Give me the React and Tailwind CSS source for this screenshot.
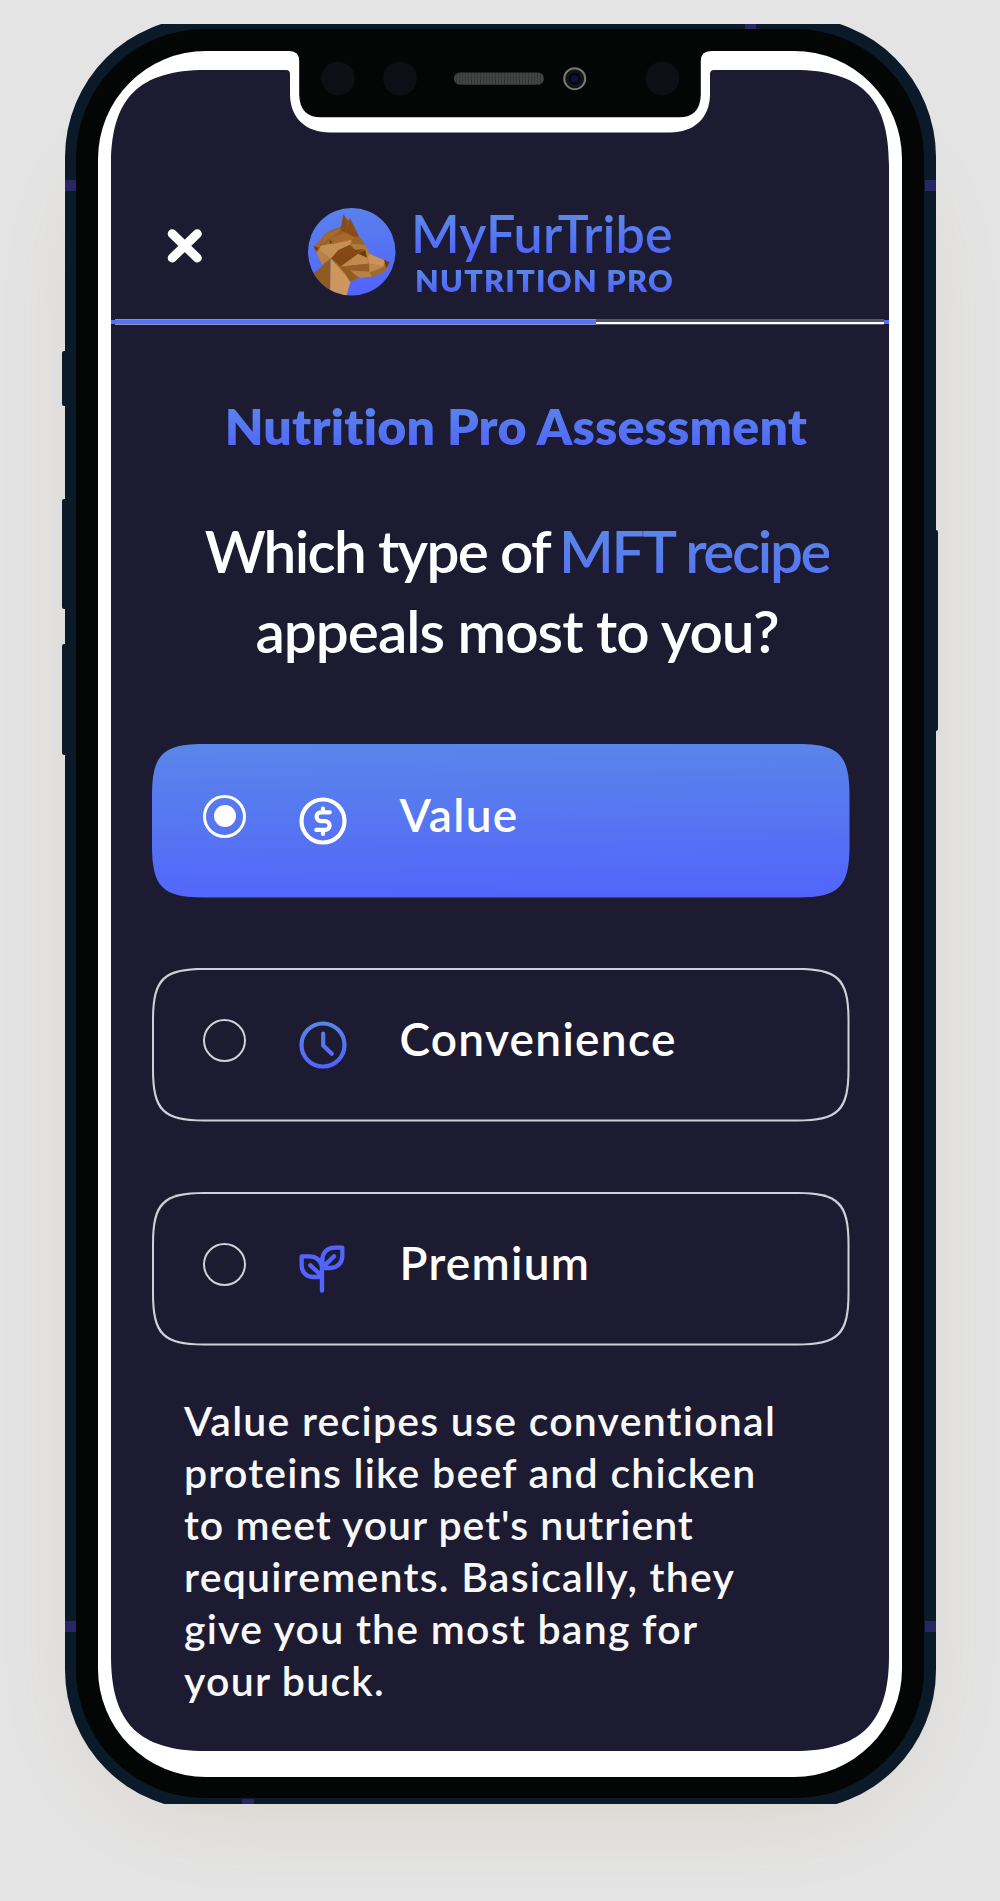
import React from "react";

const FACETS = [
  ["#a5682a", "42,139 55,125 75,100 97,88 123,79 130,42 144,62 149,52 176,107 195,133 203,147 208,160 250,178 268,186 262,202 240,222 215,229 180,232 150,244 92,175 66,192 50,158"],
  ["#8f5c20", "92,174 91,290 60,290 30,228"],
  ["#cd965c", "92,174 152,240 138,292 90,292"],
  ["#b98147", "57,148 92,174 66,192 50,158"],
  ["#6d3f12", "41,137 57,142 48,153"],
  ["#92602a", "57,138 75,100 97,88 123,79 136,97 98,110 80,128"],
  ["#a36a2e", "75,101 123,84 110,100 62,132"],
  ["#c68f54", "57,148 62,136 92,130 155,117 150,133 115,150 92,174"],
  ["#6d3f12", "88,118 98,124 90,132"],
  ["#864d16", "130,42 144,62 138,97 122,90 123,79"],
  ["#8a4e15", "149,52 176,107 165,112 138,97 144,70"],
  ["#a9692d", "98,124 138,97 165,112 155,117 95,132"],
  ["#834914", "94,174 115,149 150,133 165,146 197,140 180,156 122,198"],
  ["#9a6328", "155,117 176,107 197,134 160,130"],
  ["#b07a3e", "150,133 160,130 197,134 194,146 165,148"],
  ["#c08a4e", "122,198 180,156 203,172 205,190"],
  ["#6a3c0a", "174,160 196,148 202,172"],
  ["#b5803f", "196,134 208,160 203,182 196,150"],
  ["#c9935a", "208,160 254,180 250,198 207,190 203,172"],
  ["#96602a", "122,198 205,190 208,214 150,210"],
  ["#c08a4e", "207,190 250,198 230,212 208,216"],
  ["#9f6a30", "262,202 240,222 215,228 208,216 250,200"],
  ["#6a3c12", "252,178 268,186 258,203"],
  ["#b98147", "150,210 208,214 215,229 180,232 165,226"],
  ["#8f5c24", "122,198 150,210 176,232 150,244"],
];

function DogBadge() {
  return (
    <svg viewBox="24 23 262 262" className="size-[87.5px] shrink-0">
      <defs>
        <linearGradient id="badge" x1="0" y1="0" x2="0.15" y2="1">
          <stop offset="0" stopColor="#5a84ea" />
          <stop offset="1" stopColor="#5264fb" />
        </linearGradient>
        <clipPath id="disc"><circle cx="155" cy="154" r="131" /></clipPath>
      </defs>
      <g clipPath="url(#disc)">
        <rect x="20" y="20" width="270" height="270" fill="url(#badge)" />
        {FACETS.map(([fill, points]) => <polygon key={points} points={points} fill={fill} />)}
      </g>
    </svg>
  );
}

function NotchHardware() {
  return (
    <svg viewBox="285 49 430 70" className="pointer-events-none absolute top-[-2px] left-[187px] h-[70px] w-[430px]">
      <defs>
        <pattern id="mesh" width="3" height="3" patternUnits="userSpaceOnUse">
          <rect width="3" height="3" fill="#444" />
          <rect width="1" height="3" fill="#363636" />
        </pattern>
      </defs>
      <path d="M285 49V51H289.500Q299.200 51 299.200 61V95Q300 117.300 321 117.300H679Q700 117.300 700.800 95V61Q700.800 51 711 51H715V49Z" fill="#040605" />
      <circle cx="338" cy="78.500" r="16.800" fill="#0e0f15" />
      <circle cx="400" cy="78.500" r="16.800" fill="#0e0f15" />
      <circle cx="662.300" cy="78.500" r="16.800" fill="#0e0f15" />
      <rect x="454" y="72.500" width="90" height="12.300" rx="6" fill="url(#mesh)" />
      <circle cx="574.700" cy="78.700" r="10.500" fill="#141414" stroke="#77777a" strokeWidth="2" />
      <circle cx="574.700" cy="78.700" r="6" fill="#060709" />
      <circle cx="574.700" cy="78.700" r="3.500" fill="#0b1336" />
    </svg>
  );
}

function DollarIcon() {
  return (
    <svg viewBox="0 0 48 48" fill="none" stroke="#fff" strokeWidth="4.200" strokeLinecap="round" strokeLinejoin="round" className="size-12">
      <circle cx="24" cy="24" r="21.500" />
      <path d="M30.800 15.300H22a4.400 4.400 0 0 0 0 8.800h4.200a4.400 4.400 0 0 1 0 8.800H17.300M24 11.500v3.500M24 33v4" />
    </svg>
  );
}

function ClockIcon() {
  return (
    <svg viewBox="0 0 48 48" fill="none" stroke="url(#clock)" strokeWidth="4.200" strokeLinecap="round" strokeLinejoin="round" className="size-12">
      <defs>
        <linearGradient id="clock" gradientUnits="userSpaceOnUse" x1="22" y1="2" x2="26" y2="46">
          <stop offset="0" stopColor="#5a84ea" />
          <stop offset="1" stopColor="#5264fb" />
        </linearGradient>
      </defs>
      <circle cx="24" cy="24" r="21.500" />
      <path d="M24.200 12.700V24.600L32.800 32.800" />
    </svg>
  );
}

function SproutIcon() {
  return (
    <svg viewBox="476 374 144 144" fill="none" stroke="#5264fb" strokeWidth="13" strokeLinecap="round" strokeLinejoin="round" className="size-12">
      <path d="M484 408H508C530 408 545 424 545 445V470H520C499 470 484 456 484 436ZM606 382V406C606 428 591 443 570 443H546V419C546 397 561 382 583 382ZM510 435L545 467M581 408L547 441M545 440V511" />
    </svg>
  );
}

const OPTIONS = [
  { label: "Value", Icon: DollarIcon, selected: true },
  { label: "Convenience", Icon: ClockIcon },
  { label: "Premium", Icon: SproutIcon },
];

function Option({ label, Icon, selected }) {
  return (
    <div
      className={
        "h-[153.500px] w-[697.500px] p-[2px] [clip-path:path('M0_52C0_10.500_10.500_0_52_0H645.500C687_0_697.500_10.500_697.500_52V101.500C697.500_143_687_153.500_645.500_153.500H52C10.500_153.500_0_143_0_101.500Z')] " +
        (selected ? "bg-linear-[179deg] from-[#5a86e9] to-[#5264fb]" : "bg-[#d2d0d5]")
      }
    >
      <div
        className={
          "flex h-full items-start pl-[49px] [clip-path:path('M0_51C0_10_10_0_51_0H642.500C683.500_0_693.500_10_693.500_51V98.500C693.500_139.500_683.500_149.500_642.500_149.500H51C10_149.500_0_139.500_0_98.500Z')] " +
          (selected ? "" : "bg-[#1c1b32]")
        }
      >
        <div className={"mt-[48.700px] flex size-[43.400px] shrink-0 items-center justify-center rounded-full " + (selected ? "border-[3px] border-white" : "border-2 border-[#d2d0d5]")}>
          {selected && <div className="size-[22px] rounded-full bg-white" />}
        </div>
        <div className="mt-[50.700px] ml-[53px]"><Icon /></div>
        <div className="mt-[39px] ml-[52px] text-[46px] leading-[60px] font-semibold tracking-[1.300px]">{label}</div>
      </div>
    </div>
  );
}

export default function App() {
  return (
    <div className="relative flex h-[1901px] w-[1000px] justify-center overflow-hidden bg-[#e4e4e4] pt-[24px] font-['Lato',sans-serif] text-white">
      <div className="absolute top-[130px] left-[95px] h-[1650px] w-[810px] rounded-[120px] shadow-[0_20px_75px_17px_#dad4cd]" />
      <div className="relative h-[1779.700px] w-[871px]">
        <div className="absolute top-[327px] -left-[3px] h-[55px] w-[6px] rounded-[2px] bg-[#0a1a28]" />
        <div className="absolute top-[475px] -left-[3px] h-[110px] w-[6px] rounded-[2px] bg-[#0a1a28]" />
        <div className="absolute top-[620px] -left-[3px] h-[111px] w-[6px] rounded-[2px] bg-[#0a1a28]" />
        <div className="absolute top-[505.500px] -right-[2.500px] h-[201px] w-[6px] rounded-[2px] bg-[#0a1a28]" />

        <div className="relative h-full overflow-hidden">
          <div className="-mt-[7px] h-[1793px] rounded-[140px] bg-[#0a1a28] px-[11.500px] pt-[12px] pb-[12px]">
            <div className="relative h-[1769px] rounded-[129px] bg-[#040605] px-[22px] pt-[22px] pb-[21.500px]">
              <div className="relative h-full rounded-[108px] bg-white px-[13px] pt-[19px] pb-[25.500px]">
                <main className="h-full bg-[#1c1b32] [clip-path:path('M0_95C0_28_28_0_95_0H175Q179_0_179_4V24C179_48_195_62.500_219_62.500H559C583_62.500_599_48_599_24V4Q599_0_603_0H683C750_0_778_28_778_95V1586C778_1653_750_1681_683_1681H95C28_1681_0_1653_0_1586Z')]">
                  <header className="flex h-[249px] items-start pl-[56px]">
                    <svg viewBox="0 0 36 34" className="mt-[158.500px] h-[34px] w-[36px]" stroke="#fff" strokeWidth="9" strokeLinecap="round">
                      <path d="M5.200 4.800L30.300 28.900M30.300 4.800L5.200 28.900" />
                    </svg>
                    <div className="mt-[138px] ml-[105px]"><DogBadge /></div>
                    <div className="mt-[134px] ml-[15.500px] whitespace-nowrap">
                      <div className="bg-linear-to-b from-[#5a86e9] from-25% to-[#5264fb] to-85% bg-clip-text text-[52px] leading-[59px] font-semibold tracking-[0.100px] text-transparent">MyFurTribe</div>
                      <div className="ml-[4px] bg-linear-to-b from-[#5a86e9] from-20% to-[#5264fb] to-85% bg-clip-text text-[30.500px] leading-[34px] font-extrabold tracking-[1.300px] text-transparent">NUTRITION PRO</div>
                    </div>
                  </header>
                  <div className="flex h-[6px] items-stretch">
                    <div className="my-[1px] w-[4px] bg-[#5270f5]" />
                    <div className="w-[481px] border-y border-[#8a90c4] bg-[#5674f3]" />
                    <div className="flex-1 border-y border-[#5b5968] bg-white"><div className="h-[1.500px] bg-[#55536a]" /></div>
                    <div className="my-[1px] w-[5px] bg-[#5270f5]" />
                  </div>
                  <h2 className="mt-[71px] flex justify-center pl-[32px]">
                    <span className="bg-linear-to-b from-[#5a86e9] from-10% to-[#5264fb] to-90% bg-clip-text text-[50px] leading-[60px] font-extrabold tracking-[0.200px] text-transparent">Nutrition Pro Assessment</span>
                  </h2>
                  <h1 className="mt-[54px] pl-[34px] text-center text-[58.500px] leading-[80px] font-semibold whitespace-nowrap">
                    <div className="flex justify-center gap-[9px]">
                      <span className="tracking-[-1.700px]">Which type of</span>
                      <span className="bg-linear-to-b from-[#5a86e9] from-25% to-[#5570f4] bg-clip-text tracking-[-2.350px] text-transparent">MFT recipe</span>
                    </div>
                    <div className="tracking-[-1px]">appeals most to you?</div>
                  </h1>
                  <div className="mt-[74px] ml-[41px] flex flex-col gap-[70.500px]">
                    {OPTIONS.map((o) => <Option key={o.label} {...o} />)}
                  </div>
                  <p className="mt-[49.500px] ml-[73px] text-[41px] leading-[52px] font-semibold tracking-[1.230px] whitespace-nowrap text-[#f8f8f9]">
                    Value recipes use conventional<br />
                    proteins like beef and chicken<br />
                    <span className="tracking-[0.980px]">to meet your pet's nutrient</span><br />
                    requirements. Basically, they<br />
                    give you the most bang for<br />
                    your buck.
                  </p>
                </main>
                <NotchHardware />
              </div>
            </div>
          </div>
          <div className="absolute top-[155.500px] left-0 h-[11.500px] w-[11px] bg-[#282665]" />
          <div className="absolute top-[155.500px] right-0 h-[11.500px] w-[11px] bg-[#282665]" />
          <div className="absolute top-[1597px] left-0 h-[11px] w-[11px] bg-[#282665]" />
          <div className="absolute top-[1597px] right-0 h-[11px] w-[11px] bg-[#282665]" />
          <div className="absolute top-0 left-[680.500px] h-[5px] w-[11px] bg-[#282665]" />
          <div className="absolute bottom-0 left-[177px] h-[5px] w-[12px] bg-[#282665]" />
        </div>
      </div>
    </div>
  );
}
